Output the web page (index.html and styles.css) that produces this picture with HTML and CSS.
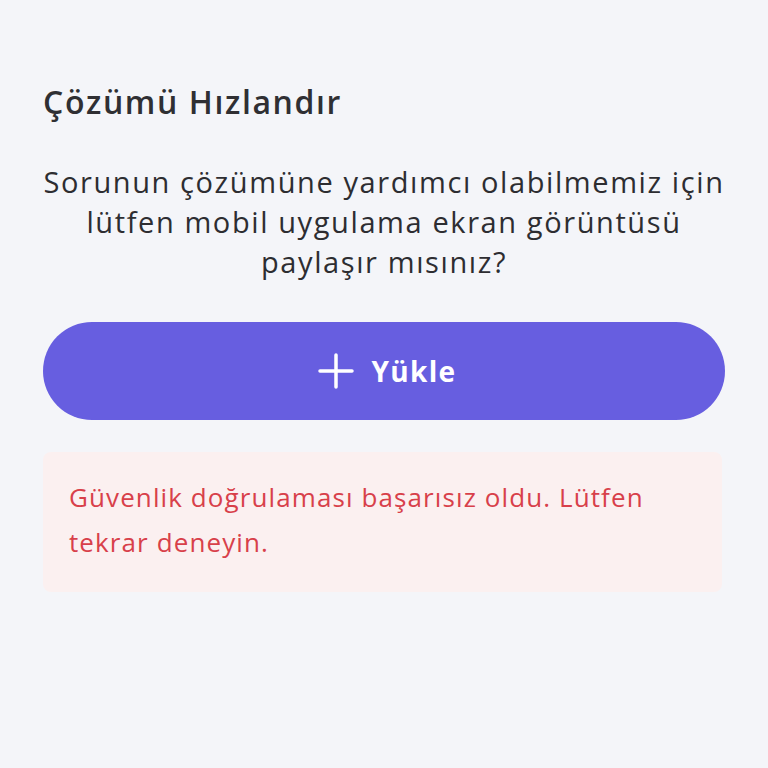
FILE: index.html
```html
<!DOCTYPE html>
<html lang="tr">
<head>
    <meta charset="UTF-8">
    <meta name="viewport" content="width=device-width, initial-scale=1.0">
    <title>Çözümü Hızlandır</title>
    <link rel="stylesheet" href="styles.css">
</head>
<body>
    <div class="page">
        <h1 class="title">Çözümü Hızlandır</h1>
        <p class="desc">Sorunun çözümüne yardımcı olabilmemiz için lütfen mobil uygulama ekran görüntüsü paylaşır mısınız?</p>

        <button class="upload" type="button">
            <svg class="plus" width="36" height="36" viewBox="0 0 36 36">
                <path d="M18 2v32M2 18h32" stroke="#fff" stroke-width="3.5" stroke-linecap="round"/>
            </svg>
            <span>Yükle</span>
        </button>

        <div class="error">Güvenlik doğrulaması başarısız oldu. Lütfen tekrar deneyin.</div>
    </div>
</body>
</html>
```

FILE: styles.css
```css
* {
    margin: 0;
    padding: 0;
    box-sizing: border-box;
}

html, body {
    background: #f4f5f9;
}

body {
    font-family: "Open Sans", "Liberation Sans", sans-serif;
    color: #2d2d31;
}

.page {
    padding: 78px 43px 0 43px;
}

.title {
    font-size: 32px;
    font-weight: 600;
    letter-spacing: 1.6px;
    line-height: 48px;
    color: #2f2f33;
}

.desc {
    margin-top: 36px;
    font-size: 29px;
    letter-spacing: 1.6px;
    line-height: 40px;
    text-align: center;
    color: #2d2d31;
}

.upload {
    margin-top: 40px;
    width: 100%;
    height: 98px;
    border: 0;
    border-radius: 49px;
    padding-left: 6px;
    background: #675ee0;
    color: #fff;
    font-family: inherit;
    font-size: 28px;
    font-weight: 700;
    letter-spacing: 1.3px;
    display: flex;
    align-items: center;
    justify-content: center;
    gap: 18px;
}

.error {
    margin-top: 32px;
    width: 679px;
    padding: 23px 26px 27px 26px;
    background: #fbf0f0;
    border-radius: 8px;
    color: #d8404a;
    font-size: 26px;
    letter-spacing: 1.1px;
    line-height: 45px;
}
```
